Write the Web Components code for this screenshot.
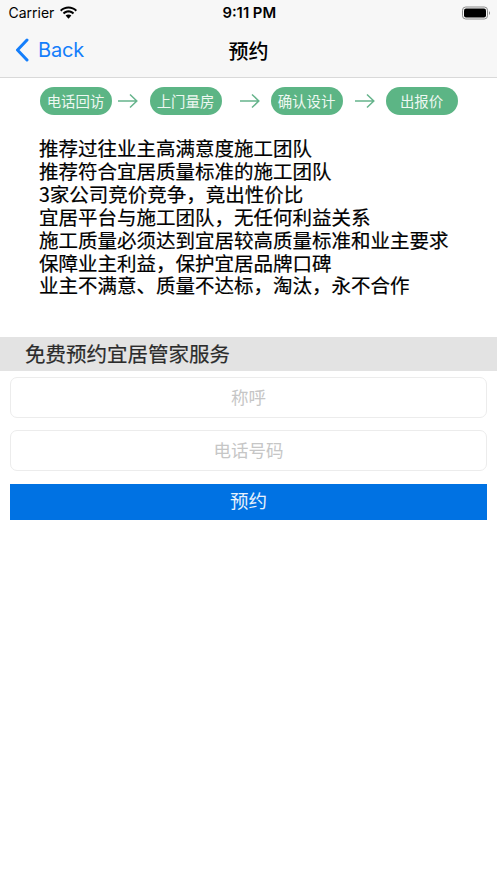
<!DOCTYPE html>
<html lang="zh"><head><meta charset="utf-8"><title>预约</title>
<style>
html,body{margin:0;padding:0;background:#fff}
body{width:497px;height:883px;overflow:hidden;font-family:Inter,"Noto Sans CJK SC",sans-serif}
</style></head><body>
<app-navbar></app-navbar>
<step-flow>
 <step-pill>电话回访</step-pill><step-arrow style="--l:6px;--r:12px"></step-arrow>
 <step-pill>上门量房</step-pill><step-arrow style="--l:18px;--r:11px"></step-arrow>
 <step-pill>确认设计</step-pill><step-arrow style="--l:12px;--r:11px"></step-arrow>
 <step-pill>出报价</step-pill>
</step-flow>
<intro-list>
 <div>推荐过往业主高满意度施工团队</div>
 <div>推荐符合宜居质量标准的施工团队</div>
 <div>3家公司竞价竞争，竟出性价比</div>
 <div>宜居平台与施工团队，无任何利益关系</div>
 <div>施工质量必须达到宜居较高质量标准和业主要求</div>
 <div>保障业主利益，保护宜居品牌口碑</div>
 <div>业主不满意、质量不达标，淘汰，永不合作</div>
</intro-list>
<section-bar>免费预约宜居管家服务</section-bar>
<booking-form>
 <form-field>称呼</form-field>
 <form-field>电话号码</form-field>
 <submit-button>预约</submit-button>
</booking-form>
<script>
const CJK='"Noto Sans CJK SC",sans-serif';
function def(name,html){
  customElements.define(name,class extends HTMLElement{
    constructor(){super();this.attachShadow({mode:'open'}).innerHTML=html;}
  });
}
def('app-navbar',`<style>
:host{display:block;background:#f7f7f7;border-bottom:1px solid #d9d9d9;height:78px;box-sizing:border-box;color:#000}
.status{height:25px;display:grid;grid-template-columns:1fr auto 1fr;align-items:center;padding:0 7px 0 8.500px;font:400 14px Inter,sans-serif}
.l{display:flex;align-items:center;gap:5px}
.t{font-weight:600;font-size:14.800px}
.r{justify-self:end;display:flex}
.nav{height:50px;display:grid;grid-template-columns:1fr auto 1fr;align-items:center;box-sizing:border-box}
.back{display:flex;align-items:center;color:#147efb;font:400 20px Inter,sans-serif;padding-left:15px;gap:9px}
.back span{letter-spacing:-.2px}
.title{font:500 20px ${CJK}}
</style>
<div class="status"><div class="l"><span>Carrier</span>
<svg width="19" height="14" viewBox="0 0 19 14"><path d="M9.5 2.6c2.7 0 5.2 1 7.1 2.8l1.4-1.5C15.700 1.700 12.700.4 9.500.4S3.300 1.700 1 3.900l1.400 1.500C4.300 3.600 6.800 2.600 9.500 2.600z"/><path d="M9.500 6.500c1.600 0 3.100.6 4.300 1.700l1.400-1.500C13.700 5.200 11.700 4.300 9.500 4.300S5.300 5.200 3.800 6.700l1.400 1.500C6.400 7.100 7.900 6.500 9.500 6.500z"/><path d="M9.500 8.400c-1.100 0-2.100.4-2.900 1.100l2.900 3.300 2.900-3.300C11.600 8.800 10.600 8.400 9.500 8.400z"/></svg></div>
<div class="t">9:11 PM</div>
<div class="r"><svg width="28" height="14" viewBox="0 0 28 14"><rect x=".5" y="1" width="25" height="12" rx="3.2" fill="none" stroke="#8a8a8a"/><rect x="2" y="2.500" width="22" height="9" rx="2" fill="#000"/><path d="M27 5.200c.7.2 1 .9 1 1.800s-.3 1.600-1 1.800z" fill="#8a8a8a"/></svg></div></div>
<div class="nav"><div class="back"><svg width="14" height="24" viewBox="0 0 14 24"><path d="M12 2 2.500 12 12 22" fill="none" stroke="#147efb" stroke-width="3" stroke-linecap="round" stroke-linejoin="round"/></svg><span>Back</span></div>
<div class="title">预约</div><div></div></div>`);
def('step-flow',`<style>:host{display:flex;align-items:center;padding:9px 0 0 40px;height:28px}</style><slot></slot>`);
def('step-pill',`<style>:host{display:flex;align-items:center;justify-content:center;width:72px;height:28px;padding:0 1px 2px 0;box-sizing:border-box;border-radius:14px;background:#5cb585;color:#eef8f2;font:400 14.400px ${CJK};flex:none}</style><slot></slot>`);
def('step-arrow',`<style>:host{display:block;margin:0 var(--r) 0 var(--l);width:20px;height:16px;flex:none}svg{display:block}</style><svg width="20" height="16" viewBox="0 0 20 16"><path d="M0 8H18.500M12 1.500 18.800 8 12 14.500" fill="none" stroke="#66b48c" stroke-width="1.500"/></svg>`);
def('intro-list',`<style>:host{display:block;padding:22px 0 0 39px;height:199px;box-sizing:border-box;font:400 19.500px/22.900px ${CJK};color:#000;-webkit-text-stroke:.2px #000}
::slotted(div){white-space:nowrap}</style><slot></slot>`);
def('section-bar',`<style>:host{display:block;margin-top:23px;height:34px;background:#e3e3e3;color:#2b2b2b;padding-left:25px;font:400 20.500px/32px ${CJK};-webkit-text-stroke:.2px #2b2b2b}</style><slot></slot>`);
def('booking-form',`<style>:host{display:flex;flex-direction:column;padding:5.500px 10px 0;gap:12px}</style><slot></slot>`);
def('form-field',`<style>:host{display:flex;align-items:center;justify-content:center;height:41px;padding-bottom:2px;box-sizing:border-box;border:1px solid #ececec;border-radius:7px;background:#fff;color:#c6c6c6;font:400 17.500px ${CJK}}</style><slot></slot>`);
def('submit-button',`<style>:host{display:flex;align-items:center;justify-content:center;height:36px;margin-top:1px;padding-bottom:3px;box-sizing:border-box;background:#0072e3;color:#e6f1fc;font:400 18.500px ${CJK}}</style><slot></slot>`);
</script>
</body></html>
